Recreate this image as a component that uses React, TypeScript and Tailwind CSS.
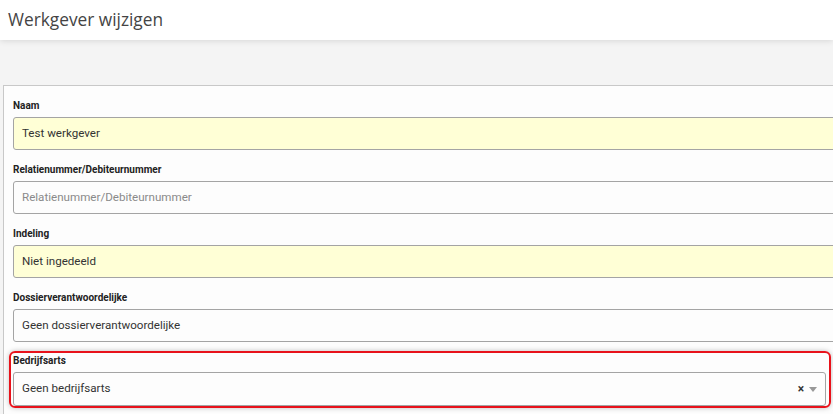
export default function App() {
  const fields: { label: string; value: string; placeholder?: boolean; required?: boolean }[] = [
    { label: "Naam", value: "Test werkgever", required: true },
    { label: "Relatienummer/Debiteurnummer", value: "Relatienummer/Debiteurnummer", placeholder: true },
    { label: "Indeling", value: "Niet ingedeeld", required: true },
    { label: "Dossierverantwoordelijke", value: "Geen dossierverantwoordelijke" },
  ];
  return (
    <div className="w-[833px] h-[414px] overflow-hidden bg-[#f4f4f4] relative" style={{ fontFamily: "Roboto, sans-serif" }}>
      <div className="h-[40px] bg-white relative z-10 shadow-[0_1px_6px_rgba(0,0,0,0.12)] flex items-center pl-[8px]">
        <h1 className="text-[17.3px] text-[#444] leading-none" style={{ fontFamily: "'Open Sans', sans-serif" }}>
          Werkgever wijzigen
        </h1>
      </div>
      <div className="mt-[45px] ml-[3px] w-[860px] h-[340px] bg-[#fdfdfd] border border-[#c8c8c8] pt-[13px] pl-[9px]">
        {fields.map((f) => (
          <div key={f.label} className="h-[64px]">
            <div className="text-[10px] font-bold text-[#222] leading-[13px] h-[13px]">{f.label}</div>
            <div
              className={`mt-[5px] h-[33px] rounded-[3px] border border-[#a4a4a4] flex items-center pl-[8px] text-[11.6px] ${
                f.required ? "bg-[#ffffd6]" : "bg-[#fdfdfd]"
              } ${f.placeholder ? "text-[#8a8a8a]" : "text-[#333]"}`}
            >
              {f.value}
            </div>
          </div>
        ))}
        <div className="-ml-[4px] -mt-[4px] w-[822px] h-[57px] rounded-[6px] border-2 border-[#e8121b] shadow-[0_0_5px_rgba(0,0,0,0.25)] pt-[1px] pl-[2px] pr-[3px]">
          <div className="text-[10px] font-bold text-[#222] leading-[13px] h-[13px]">Bedrijfsarts</div>
          <div className="mt-[5px] h-[34px] rounded-[3px] border border-[#a4a4a4] bg-[#fdfdfd] flex items-center pl-[8px] pr-[8px] text-[11.6px] text-[#333]">
            <span className="flex-1">Geen bedrijfsarts</span>
            <span className="text-[12px] font-bold text-[#333] leading-none mr-[5px]">×</span>
            <svg width="8" height="5" viewBox="0 0 8 5">
              <path d="M0 0 L8 0 L4 5 Z" fill="#999" />
            </svg>
          </div>
        </div>
      </div>
    </div>
  );
}
